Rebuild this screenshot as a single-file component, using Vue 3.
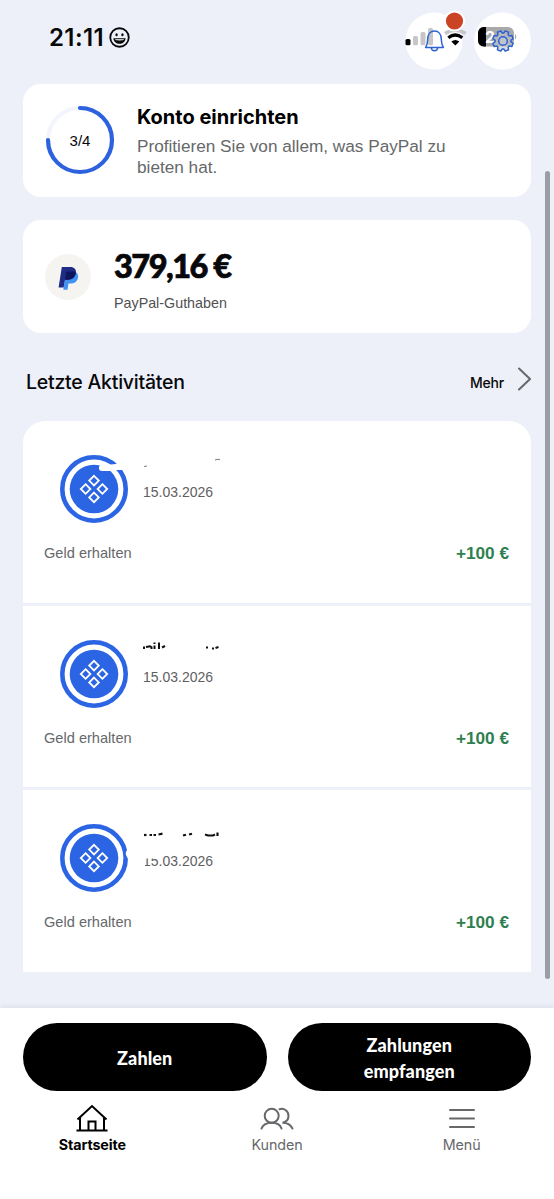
<template>
  <div class="screen">
    <header class="status-bar">
      <div class="clock">
        <span>21:11</span>
        <svg width="21" height="21" viewBox="0 0 20 20">
          <circle cx="10" cy="10" r="8.8" fill="none" stroke="#08080a" stroke-width="1.7" />
          <ellipse cx="7.2" cy="7.4" rx="1.1" ry="1.5" fill="#08080a" />
          <ellipse cx="12.8" cy="7.4" rx="1.1" ry="1.5" fill="#08080a" />
          <path d="M4.2 10.6h11.6c-.2 3.3-2.6 5.3-5.8 5.3s-5.6-2-5.8-5.3z" fill="#08080a" />
          <path d="M5.6 11.7h8.8c-.3.8-1.5 1.1-4.4 1.1s-4.1-.3-4.4-1.1z" fill="#fff" />
        </svg>
      </div>
      <svg class="status-icons" width="154" height="80" viewBox="400 0 154 80">
        <circle cx="434" cy="41" r="28.5" fill="#fff" />
        <circle cx="502.500" cy="41" r="28.5" fill="#fff" />
        <!-- Signal -->
        <rect x="405.500" y="39" width="5" height="6.3" rx="1.5" fill="#000" />
        <rect x="413" y="36" width="5" height="9.3" rx="1.5" fill="#c6c6c8" />
        <rect x="420.5" y="32" width="5" height="13.3" rx="1.5" fill="#c6c6c8" />
        <rect x="428" y="28" width="5" height="17.3" rx="1.5" fill="#c6c6c8" />
        <!-- WLAN -->
        <g fill="none">
          <path d="M445 33.600Q455.300 26.500 465.600 33.600" stroke="#c6c6c8" stroke-width="3.6" />
          <path d="M448.300 37.800Q455.300 32.200 462.300 37.800" stroke="#000" stroke-width="3.2" />
        </g>
        <path d="M451.300 41.6Q455.300 38.400 459.300 41.6L455.300 45.600z" fill="#000" />
        <circle cx="454.500" cy="21" r="10.5" fill="#fff" />
        <circle cx="454.500" cy="21" r="8.6" fill="#cb4325" />
        <!-- Glocke -->
        <g fill="none" stroke="#2c62d2" stroke-width="1.5" stroke-linejoin="round">
          <path d="M425.600 47.500c1.600-2.300 2-4.300 2.100-8.300.1-5 2.800-8.200 6.800-8.200s6.700 3.200 6.800 8.200c.1 4 .5 6 2.100 8.300z" />
          <path d="M431.300 47.800c.2 2 1.400 3 3.200 3s3-1 3.200-3" />
        </g>
        <!-- Akku -->
        <rect x="478" y="27" width="36" height="19.5" rx="6" fill="#a9a9ab" />
        <path d="M486 27h-2.500a5.500 6 0 0 0-5.500 6v7.500a5.500 6 0 0 0 5.500 6h2.500z" fill="#000" />
        <path d="M515 34c1.600.7 1.600 4.800 0 5.500z" fill="#a9a9ab" />
        <text x="485" y="43" class="battery-text">2</text>
        <!-- Zahnrad -->
        <g fill="none" stroke="#2c62d2" stroke-width="1.5" stroke-linejoin="round">
          <path :d="gearPath" fill="#c3c5ca" fill-opacity="0.6" />
          <circle cx="503" cy="41" r="4.3" fill="#bfc3cc" />
        </g>
      </svg>
    </header>

    <main class="content">
      <section class="card setup">
        <div class="progress">
          <svg width="70" height="70" viewBox="0 0 70 70">
            <circle cx="35" cy="35" r="32" fill="none" stroke="#f3f5fc" stroke-width="4" />
            <path d="M35 3a32 32 0 1 1-32 32" fill="none" stroke="#2c62de" stroke-width="4.2" stroke-linecap="round" />
          </svg>
          <span class="progress-label">3/4</span>
        </div>
        <div class="setup-text">
          <h2>Konto einrichten</h2>
          <p>Profitieren Sie von allem, was PayPal zu<br />bieten hat.</p>
        </div>
      </section>

      <section class="card balance">
        <div class="logo">
          <svg width="22" height="25" viewBox="0 0 22 25">
            <path d="M8.300 5.500h8c3 1 4.300 3.200 3.700 6.300-.8 4-3.600 5.800-7.700 5.800h-1.800L9.500 23.800H5.300z" fill="#4094f4" />
            <path d="M3.800 1h8.500c4 0 6.200 2.300 5.500 6.200-.8 4.400-3.800 6.500-8.300 6.500H7L5.600 21.500H.6z" fill="#1f2c86" />
            <path d="M8.300 5.500h9.400c.2 5.400-3.200 8.200-8.200 8.200H7z" fill="#10165e" />
          </svg>
        </div>
        <div>
          <div class="amount">379,16 €</div>
          <div class="amount-label">PayPal-Guthaben</div>
        </div>
      </section>

      <div class="list-header">
        <h3>Letzte Aktivitäten</h3>
        <a class="more">
          <span>Mehr</span>
          <svg width="14" height="24" viewBox="0 0 14 24">
            <path d="M2 1.500l11 10.500L2 22.500" fill="none" stroke="#66686c" stroke-width="2" stroke-linecap="round" />
          </svg>
        </a>
      </div>

      <div class="activities">
        <article v-for="item in activities" :key="item.id" class="activity">
          <div class="activity-top">
            <svg class="avatar" width="68" height="68" viewBox="0 0 68 68">
              <circle cx="34" cy="34" r="31.7" fill="#fff" stroke="#2c65e4" stroke-width="4.6" />
              <circle cx="34" cy="34" r="24.3" fill="#2c65e4" />
              <g fill="none" stroke="#fff" stroke-width="1.8">
                <path d="M34 20.800l4.800 4.800-4.800 4.800-4.800-4.800z" />
                <path d="M34 37.600l4.800 4.800-4.800 4.800-4.800-4.800z" />
                <path d="M25.600 29.200l4.800 4.800-4.800 4.800-4.800-4.800z" />
                <path d="M42.400 29.200l4.800 4.800-4.800 4.800-4.800-4.800z" />
              </g>
              <path v-if="item.cover" :d="item.cover" fill="#fff" />
            </svg>
            <div class="activity-info">
              <svg class="name" width="80" height="14" viewBox="0 0 80 14">
                <path v-for="(mark, i) in item.marks" :key="i" :d="mark" :stroke-width="item.weight" :stroke="item.ink" fill="none" />
              </svg>
              <div :class="['date', { cut: item.cut }]">{{ item.date }}</div>
            </div>
          </div>
          <div class="activity-bottom">
            <span class="kind">Geld erhalten</span>
            <span class="value">{{ item.value }}</span>
          </div>
        </article>
      </div>
    </main>

    <div class="scrollbar"></div>

    <footer class="bottom">
      <div class="buttons">
        <button>Zahlen</button>
        <button>Zahlungen<br />empfangen</button>
      </div>
      <nav class="tabs">
        <a class="tab active">
          <svg width="36" height="30" viewBox="0 0 36 30" fill="none" stroke="#000" stroke-width="2">
            <path d="M3.500 16.500L18 3l14.500 13.500M6 14.500v13M30 14.500v13M2.500 27.500h31M14.500 27.500v-9h7v9" />
          </svg>
          <span>Startseite</span>
        </a>
        <a class="tab">
          <svg width="36" height="30" viewBox="0 0 36 30" fill="none" stroke="#66686a" stroke-width="2" stroke-linecap="round">
            <circle cx="12.700" cy="12.800" r="7" />
            <path d="M2.500 25.500c1.500-3.400 5-5.700 10.200-5.700 5 0 8.600 2.300 9.800 5.700" />
            <path d="M20.500 6.200c4.800-1.400 9 1.900 9 6.600 0 3.500-2.500 6.300-6 7 4.500 0 8.200 2.200 10 5.700" />
          </svg>
          <span>Kunden</span>
        </a>
        <a class="tab">
          <svg width="36" height="30" viewBox="0 0 36 30" fill="none" stroke="#66686a" stroke-width="2" stroke-linecap="round">
            <path d="M6 7h24M6 15.500h24M6 24h24" />
          </svg>
          <span>Menü</span>
        </a>
      </nav>
    </footer>
  </div>
</template>

<script setup>
import { ref, computed } from 'vue';

const activities = ref([
  {
    id: 1,
    date: '15.03.2026',
    value: '+100 €',
    ink: '#77787a',
    weight: 1,
    marks: ['M1 9.500l3-.5', 'M72 3l3-.8l2 .6'],
    cover: 'M39 13.500q-.5-3.500 3-4h9l7-.8 8 .2v6h-12l-3 1H42q-3 0-3-2.400z'
  },
  {
    id: 2,
    date: '15.03.2026',
    value: '+100 €',
    ink: '#111',
    weight: 2,
    marks: ['M1 7v-2.500M3 5l4-.8 1.500 1V7', 'M11.500 3.500V7', 'M11.500 0.500v1.500', 'M16 0.500V7', 'M19 5.500l3-1.500', 'M63 5.500h2M69 6.500h2M72.500 6l3-1']
  },
  {
    id: 3,
    date: '15.03.2026',
    value: '+100 €',
    ink: '#111',
    weight: 2.2,
    marks: ['M1 9h2.500', 'M6.500 9h2.500M10.500 9h2.500', 'M15.500 8.500l4-.8', 'M40 9.500l3-.8M46 8.500l3-.8', 'M62 8.500l3 1h5l2-1', 'M74.500 6.500v3.500'],
    cover: 'M68 25q-3 3-2 6l2 4z',
    cut: true
  }
]);

// Umriss des Zahnrads mit acht Zähnen
const gearPath = computed(() => {
  const points = [];
  for (let i = 0; i < 8; i++) {
    [[-17, 8], [-10, 10.4], [10, 10.4], [17, 8]].forEach(([offset, r]) => {
      const a = ((i * 45 + 22.5 + offset) * Math.PI) / 180;
      points.push(`${(503 + r * Math.cos(a)).toFixed(2)} ${(41 + r * Math.sin(a)).toFixed(2)}`);
    });
  }
  return `M${points.join('L')}Z`;
});
</script>

<style>
body {
  margin: 0;
  background: #fff;
}
</style>

<style scoped>
.screen {
  position: relative;
  display: flex;
  flex-direction: column;
  width: 554px;
  height: 1199px;
  overflow: hidden;
  background: #edf0f9;
  font-family: Inter, "Liberation Sans", sans-serif;
  color: #08080a;
}

h2,
h3,
p {
  margin: 0;
}

.status-bar {
  display: flex;
  justify-content: space-between;
  height: 84px;
}

.clock {
  display: flex;
  align-items: center;
  gap: 5px;
  height: 74px;
  padding-left: 49px;
  font-size: 24px;
  font-weight: 600;
  letter-spacing: 0.4px;
}

.battery-text {
  font-size: 16px;
  font-weight: 700;
  fill: #fff;
}

.content {
  flex: 1;
  padding: 0 23px;
}

.card {
  display: flex;
  box-sizing: border-box;
  height: 113px;
  margin-bottom: 23px;
  border-radius: 18px;
  background: #fff;
}

.setup {
  padding: 21px 22px;
}

.progress {
  display: grid;
  place-items: center;
  width: 69px;
  height: 70px;
  margin-right: 23px;
}

.progress > * {
  grid-area: 1 / 1;
}

.progress-label {
  font-family: "Liberation Sans", sans-serif;
  font-size: 15px;
}

.setup-text h2 {
  font-size: 20px;
  line-height: 24px;
  font-weight: 700;
  color: #000;
}

.setup-text p {
  margin-top: 7px;
  font-family: "Liberation Sans", sans-serif;
  font-size: 17.2px;
  line-height: 21px;
  white-space: nowrap;
  color: #66686a;
}

.balance {
  padding: 34px 22px 0;
}

.logo {
  display: flex;
  align-items: center;
  justify-content: center;
  box-sizing: border-box;
  width: 46px;
  height: 46px;
  padding: 2px 0 0 2px;
  margin-right: 23px;
  border-radius: 50%;
  background: #f5f4f1;
}

.amount {
  margin-top: -6px;
  font-family: Lato, sans-serif;
  font-size: 32.5px;
  line-height: 36px;
  font-weight: 900;
  letter-spacing: -1.5px;
  -webkit-text-stroke: 0.7px #08080a;
  white-space: nowrap;
}

.amount-label {
  margin-top: 10px;
  font-family: "Liberation Sans", sans-serif;
  font-size: 14.3px;
  line-height: 18px;
  color: #4f5053;
}

.list-header {
  display: flex;
  align-items: flex-start;
  justify-content: space-between;
  box-sizing: border-box;
  height: 65px;
  padding: 14px 0 0 3px;
}

.list-header h3 {
  font-size: 19.5px;
  line-height: 24px;
  font-weight: 500;
  letter-spacing: -0.23px;
}

.more {
  display: flex;
  align-items: flex-start;
  gap: 13px;
  font-size: 14px;
  line-height: 25px;
  font-weight: 500;
  letter-spacing: -0.2px;
}

.more svg {
  margin-top: -3px;
}

.activities {
  display: flex;
  flex-direction: column;
  gap: 3px;
  overflow: hidden;
  border-radius: 22px 22px 0 0;
}

.activity {
  box-sizing: border-box;
  height: 181.7px;
  padding: 34px 22px 0 21px;
  background: #fff;
}

.activity-top {
  display: flex;
  padding-left: 16px;
}

.activity-info {
  padding: 2px 0 0 15px;
}

.name {
  display: block;
}

.date {
  margin-top: 12px;
  font-family: "Liberation Sans", sans-serif;
  font-size: 14px;
  line-height: 18px;
  color: #5f6063;
}

.cut {
  clip-path: polygon(2px 6px, 18px 6px, 18px 0, 100% 0, 100% 100%, 2px 100%);
}

.activity-bottom {
  display: flex;
  align-items: center;
  justify-content: space-between;
  margin-top: 19px;
  line-height: 22px;
}

.kind {
  font-family: "Liberation Sans", sans-serif;
  font-size: 14.6px;
  color: #66686a;
}

.value {
  font-family: "Liberation Sans", sans-serif;
  font-size: 17.2px;
  font-weight: 700;
  color: #2f7f50;
}

.scrollbar {
  position: absolute;
  top: 171px;
  left: 545px;
  width: 5px;
  height: 808px;
  border-radius: 3px;
  background: #9b9da6;
}

.bottom {
  box-sizing: border-box;
  height: 191px;
  padding: 15px 23px 0;
  background: #fff;
  box-shadow: 0 -2px 5px rgba(60, 60, 90, 0.08);
}

.buttons {
  display: flex;
  gap: 21px;
}

.buttons button {
  flex: 1;
  height: 68px;
  padding: 2px 0 0;
  border: none;
  border-radius: 34px;
  background: #000;
  color: #fff;
  font-family: Lato, sans-serif;
  font-size: 18px;
  line-height: 26px;
  font-weight: 900;
  letter-spacing: 0.1px;
}

.tabs {
  display: flex;
  margin: 12px -23px 0;
}

.tab {
  display: flex;
  flex: 1;
  flex-direction: column;
  align-items: center;
  font-size: 14.3px;
  line-height: 18px;
  letter-spacing: -0.1px;
  color: #66686a;
}

.tab span {
  margin-top: 3px;
}

.tab.active {
  font-weight: 700;
  color: #000;
}
</style>
